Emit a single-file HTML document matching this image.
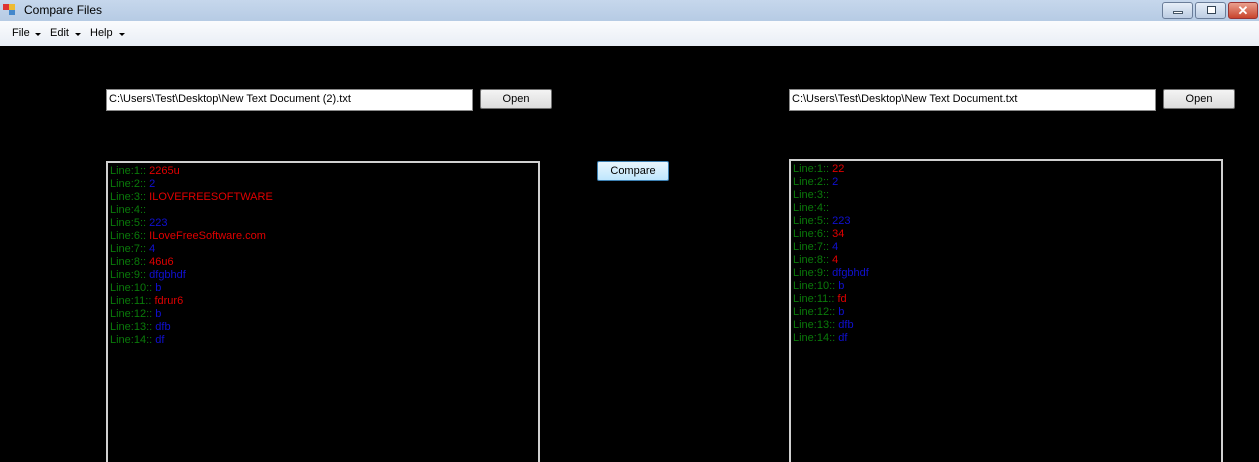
<!DOCTYPE html>
<html><head><style>
*{margin:0;padding:0;box-sizing:border-box}
body{width:1259px;height:462px;background:#000;position:relative;overflow:hidden;font-family:"Liberation Sans",sans-serif;font-size:11px}
.title{position:absolute;left:0;top:0;width:1259px;height:21px;background:linear-gradient(#c6d7ec,#b6cbe4);}
.title span{position:absolute;left:24px;top:3px;font-size:12px;color:#000}
.menu{position:absolute;left:0;top:21px;width:1259px;height:25px;background:linear-gradient(#fafbfd,#e9eef5)}
.menu span{position:absolute;top:6px;font-size:11px}
.ab{position:absolute;width:10px;height:0;border-left:3px solid transparent;border-right:3px solid transparent;border-top:3px solid #000}
.tb{position:absolute;background:#fff;border:1px solid #8a8a8a;height:22px;padding:3px 2px;font-size:11px}
.btn{position:absolute;height:20px;width:72px;background:linear-gradient(#f4f4f4,#dcdcdc);border:1px solid #707070;border-radius:2px;text-align:center;line-height:18px;font-size:11px}
.panel{position:absolute;border:2px solid #d0d0d0;border-bottom:none;padding:2px 2px;line-height:13px;font-size:11px}
.g{color:#0a7a0a}.r{color:#e00000}.b{color:#1010d0}
.wb{position:absolute;top:2px;height:17px;border:1px solid #6a7d99;border-radius:3px;background:linear-gradient(#e6eef8,#bccde3)}
</style></head><body>
<div class="title">
<div style="position:absolute;left:3px;top:4px;width:6px;height:6px;background:#d33"></div>
<div style="position:absolute;left:9px;top:4px;width:6px;height:6px;background:#eb3"></div>
<div style="position:absolute;left:9px;top:10px;width:6px;height:5px;background:#48c"></div>
<span>Compare Files</span>
<div class="wb" style="left:1162px;width:31px"><div style="position:absolute;left:10px;top:8px;width:10px;height:3px;background:#fff;border:1px solid #456"></div></div>
<div class="wb" style="left:1195px;width:31px"><div style="position:absolute;left:11px;top:3px;width:9px;height:8px;border:1px solid #345;background:#fff"></div></div>
<div class="wb" style="left:1228px;width:30px;background:linear-gradient(#e9a08e,#c9442c);border-color:#933;color:#fff;text-align:center;font-weight:bold;font-size:13px;line-height:15px">✕</div>
</div>
<div class="menu">
<span style="left:12px">File</span><div class="ab" style="left:35px;top:12px;width:6px"></div>
<span style="left:50px">Edit</span><div class="ab" style="left:75px;top:12px;width:6px"></div>
<span style="left:90px">Help</span><div class="ab" style="left:119px;top:12px;width:6px"></div>
</div>
<div class="tb" style="left:106px;top:89px;width:367px">C:\Users\Test\Desktop\New Text Document (2).txt</div>
<div class="btn" style="left:480px;top:89px">Open</div>
<div class="tb" style="left:789px;top:89px;width:367px">C:\Users\Test\Desktop\New Text Document.txt</div>
<div class="btn" style="left:1163px;top:89px">Open</div>
<div class="btn" style="left:597px;top:161px;border-color:#3c7fb1;background:linear-gradient(#eaf6fd,#bee6fd)">Compare</div>
<div class="panel" style="left:106px;top:161px;width:434px;height:301px">
<div><span class="g">Line:1:: </span><span class="r">2265u</span></div>
<div><span class="g">Line:2:: </span><span class="b">2</span></div>
<div><span class="g">Line:3:: </span><span class="r">ILOVEFREESOFTWARE</span></div>
<div><span class="g">Line:4:: </span></div>
<div><span class="g">Line:5:: </span><span class="b">223</span></div>
<div><span class="g">Line:6:: </span><span class="r">ILoveFreeSoftware.com</span></div>
<div><span class="g">Line:7:: </span><span class="b">4</span></div>
<div><span class="g">Line:8:: </span><span class="r">46u6</span></div>
<div><span class="g">Line:9:: </span><span class="b">dfgbhdf</span></div>
<div><span class="g">Line:10:: </span><span class="b">b</span></div>
<div><span class="g">Line:11:: </span><span class="r">fdrur6</span></div>
<div><span class="g">Line:12:: </span><span class="b">b</span></div>
<div><span class="g">Line:13:: </span><span class="b">dfb</span></div>
<div><span class="g">Line:14:: </span><span class="b">df</span></div>
</div>
<div class="panel" style="left:789px;top:159px;width:434px;height:303px">
<div><span class="g">Line:1:: </span><span class="r">22</span></div>
<div><span class="g">Line:2:: </span><span class="b">2</span></div>
<div><span class="g">Line:3:: </span></div>
<div><span class="g">Line:4:: </span></div>
<div><span class="g">Line:5:: </span><span class="b">223</span></div>
<div><span class="g">Line:6:: </span><span class="r">34</span></div>
<div><span class="g">Line:7:: </span><span class="b">4</span></div>
<div><span class="g">Line:8:: </span><span class="r">4</span></div>
<div><span class="g">Line:9:: </span><span class="b">dfgbhdf</span></div>
<div><span class="g">Line:10:: </span><span class="b">b</span></div>
<div><span class="g">Line:11:: </span><span class="r">fd</span></div>
<div><span class="g">Line:12:: </span><span class="b">b</span></div>
<div><span class="g">Line:13:: </span><span class="b">dfb</span></div>
<div><span class="g">Line:14:: </span><span class="b">df</span></div>
</div>
</body></html>
